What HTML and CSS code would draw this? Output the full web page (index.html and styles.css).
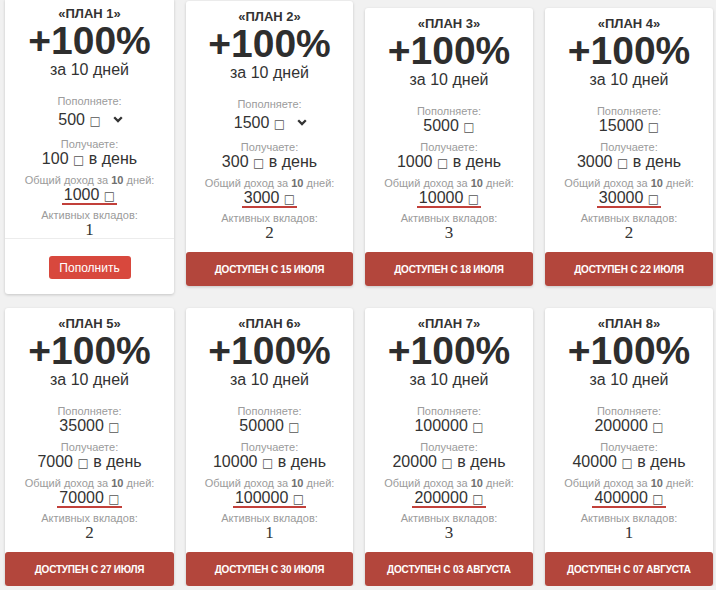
FILE: index.html
```html
<!DOCTYPE html>
<html lang="ru">
<head>
    <meta charset="UTF-8">
    <title>Планы</title>
    <link rel="stylesheet" href="styles.css">
</head>
<body>
<div class="plans">
    <div class="plan plan_open">
        <div class="plan_name">«ПЛАН 1»</div>
        <div class="plan_percent">+100%</div>
        <div class="plan_term">за 10 дней</div>
        <div class="plan_info">
            <div class="label">Пополняете:</div>
            <div class="value select">
                <span>500 <span class="rub">□</span></span>
                <svg class="chevron" width="10" height="7" viewBox="0 0 10 7"><polyline points="1.2,1.2 5,5 8.8,1.2" fill="none" stroke="#333" stroke-width="2.3"/></svg>
            </div>
            <div class="label">Получаете:</div>
            <div class="value">100 <span class="rub">□</span> в день</div>
            <div class="label">Общий доход за <b>10</b> дней:</div>
            <div class="value"><span class="total">1000 <span class="rub">□</span></span></div>
            <div class="label">Активных вкладов:</div>
            <div class="count">1</div>
        </div>
        <div class="plan_footer">
            <button class="btn_fill">Пополнить</button>
        </div>
    </div>
    <div class="plan">
        <div class="plan_name">«ПЛАН 2»</div>
        <div class="plan_percent">+100%</div>
        <div class="plan_term">за 10 дней</div>
        <div class="plan_info">
            <div class="label">Пополняете:</div>
            <div class="value select">
                <span>1500 <span class="rub">□</span></span>
                <svg class="chevron" width="10" height="7" viewBox="0 0 10 7"><polyline points="1.2,1.2 5,5 8.8,1.2" fill="none" stroke="#333" stroke-width="2.3"/></svg>
            </div>
            <div class="label">Получаете:</div>
            <div class="value">300 <span class="rub">□</span> в день</div>
            <div class="label">Общий доход за <b>10</b> дней:</div>
            <div class="value"><span class="total">3000 <span class="rub">□</span></span></div>
            <div class="label">Активных вкладов:</div>
            <div class="count">2</div>
        </div>
        <button class="btn_wait">Доступен с 15 июля</button>
    </div>
    <div class="plan">
        <div class="plan_name">«ПЛАН 3»</div>
        <div class="plan_percent">+100%</div>
        <div class="plan_term">за 10 дней</div>
        <div class="plan_info">
            <div class="label">Пополняете:</div>
            <div class="value">5000 <span class="rub">□</span></div>
            <div class="label">Получаете:</div>
            <div class="value">1000 <span class="rub">□</span> в день</div>
            <div class="label">Общий доход за <b>10</b> дней:</div>
            <div class="value"><span class="total">10000 <span class="rub">□</span></span></div>
            <div class="label">Активных вкладов:</div>
            <div class="count">3</div>
        </div>
        <button class="btn_wait">Доступен с 18 июля</button>
    </div>
    <div class="plan">
        <div class="plan_name">«ПЛАН 4»</div>
        <div class="plan_percent">+100%</div>
        <div class="plan_term">за 10 дней</div>
        <div class="plan_info">
            <div class="label">Пополняете:</div>
            <div class="value">15000 <span class="rub">□</span></div>
            <div class="label">Получаете:</div>
            <div class="value">3000 <span class="rub">□</span> в день</div>
            <div class="label">Общий доход за <b>10</b> дней:</div>
            <div class="value"><span class="total">30000 <span class="rub">□</span></span></div>
            <div class="label">Активных вкладов:</div>
            <div class="count">2</div>
        </div>
        <button class="btn_wait">Доступен с 22 июля</button>
    </div>

    <div class="plan">
        <div class="plan_name">«ПЛАН 5»</div>
        <div class="plan_percent">+100%</div>
        <div class="plan_term">за 10 дней</div>
        <div class="plan_info">
            <div class="label">Пополняете:</div>
            <div class="value">35000 <span class="rub">□</span></div>
            <div class="label">Получаете:</div>
            <div class="value">7000 <span class="rub">□</span> в день</div>
            <div class="label">Общий доход за <b>10</b> дней:</div>
            <div class="value"><span class="total">70000 <span class="rub">□</span></span></div>
            <div class="label">Активных вкладов:</div>
            <div class="count">2</div>
        </div>
        <button class="btn_wait">Доступен с 27 июля</button>
    </div>
    <div class="plan">
        <div class="plan_name">«ПЛАН 6»</div>
        <div class="plan_percent">+100%</div>
        <div class="plan_term">за 10 дней</div>
        <div class="plan_info">
            <div class="label">Пополняете:</div>
            <div class="value">50000 <span class="rub">□</span></div>
            <div class="label">Получаете:</div>
            <div class="value">10000 <span class="rub">□</span> в день</div>
            <div class="label">Общий доход за <b>10</b> дней:</div>
            <div class="value"><span class="total">100000 <span class="rub">□</span></span></div>
            <div class="label">Активных вкладов:</div>
            <div class="count">1</div>
        </div>
        <button class="btn_wait">Доступен с 30 июля</button>
    </div>
    <div class="plan">
        <div class="plan_name">«ПЛАН 7»</div>
        <div class="plan_percent">+100%</div>
        <div class="plan_term">за 10 дней</div>
        <div class="plan_info">
            <div class="label">Пополняете:</div>
            <div class="value">100000 <span class="rub">□</span></div>
            <div class="label">Получаете:</div>
            <div class="value">20000 <span class="rub">□</span> в день</div>
            <div class="label">Общий доход за <b>10</b> дней:</div>
            <div class="value"><span class="total">200000 <span class="rub">□</span></span></div>
            <div class="label">Активных вкладов:</div>
            <div class="count">3</div>
        </div>
        <button class="btn_wait">Доступен с 03 августа</button>
    </div>
    <div class="plan">
        <div class="plan_name">«ПЛАН 8»</div>
        <div class="plan_percent">+100%</div>
        <div class="plan_term">за 10 дней</div>
        <div class="plan_info">
            <div class="label">Пополняете:</div>
            <div class="value">200000 <span class="rub">□</span></div>
            <div class="label">Получаете:</div>
            <div class="value">40000 <span class="rub">□</span> в день</div>
            <div class="label">Общий доход за <b>10</b> дней:</div>
            <div class="value"><span class="total">400000 <span class="rub">□</span></span></div>
            <div class="label">Активных вкладов:</div>
            <div class="count">1</div>
        </div>
        <button class="btn_wait">Доступен с 07 августа</button>
    </div>
</div>
</body>
</html>
```

FILE: styles.css
```css
*{
    padding: 0;
    margin: 0;
    box-sizing: border-box;
}
body{
    background: #f1f1f1;
    font-family: "Liberation Sans", Arial, sans-serif;
    color: #333;
    overflow: hidden;
}
.plans{
    display: grid;
    grid-template-columns: 169px 167px 168px 168px;
    justify-content: space-between;
    align-items: end;
    row-gap: 22px;
    padding: 0 3px 0 5px;
}
.plan{
    display: flex;
    flex-direction: column;
    background: #fff;
    border-radius: 3px;
    box-shadow: 0 1px 3px rgba(0,0,0,0.18);
    text-align: center;
    padding-top: 8px;
}
.plan_open{
    margin-top: -2px;
    margin-bottom: -8px;
}
.plan_name{
    font-size: 13px;
    font-weight: bold;
    line-height: 16px;
}
.plan_percent{
    font-size: 39px;
    font-weight: bold;
    line-height: 38px;
    color: #2e2e2e;
}
.plan_term{
    font-size: 16px;
    line-height: 20px;
}
.plan_info{
    margin-top: 14px;
}
.label{
    font-size: 11px;
    line-height: 14px;
    color: #9b9b9b;
}
.label b{
    color: #6f6f6f;
}
.value{
    font-size: 16px;
    line-height: 16px;
    margin-bottom: 6px;
}
.select{
    display: flex;
    justify-content: center;
    align-items: center;
    gap: 12px;
    height: 23px;
    padding-left: 2px;
}
.chevron{
    display: block;
}
.rub{
    font-family: "DejaVu Sans", sans-serif;
    font-size: 12px;
    line-height: 0;
    color: #555;
}
.total{
    display: inline-block;
    padding: 0 2px;
    border-bottom: 2px solid #c2403a;
}
.value:nth-child(6){
    margin-bottom: 3px;
}
.count{
    font-family: "Liberation Serif", serif;
    font-size: 17px;
    line-height: 16px;
}
.btn_wait{
    margin-top: 11px;
    height: 34px;
    border: none;
    border-radius: 3px;
    background: #b3463c;
    color: #fff;
    font-family: "Liberation Sans", Arial, sans-serif;
    font-size: 10px;
    font-weight: bold;
    letter-spacing: -0.2px;
    text-transform: uppercase;
}
.plan_footer{
    border-top: 1px solid #ececec;
    padding: 17px 0 15px;
}
.btn_fill{
    width: 82px;
    height: 23px;
    border: none;
    border-radius: 3px;
    background: #d8483d;
    color: #fff;
    font-family: "Liberation Sans", Arial, sans-serif;
    font-size: 12px;
}
```
